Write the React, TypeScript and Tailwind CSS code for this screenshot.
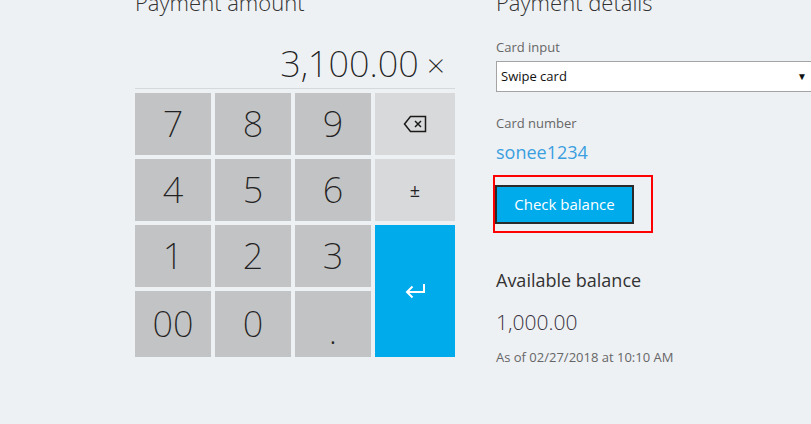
import React from "react";

const digitKey =
  "flex items-center justify-center bg-[#c2c3c4] text-[36px] font-extralight text-[#222] font-['Noto_Sans','Open_Sans',sans-serif]";
const funcKey = "flex items-center justify-center bg-[#d8d9da] text-[#222]";

function BackspaceIcon() {
  return (
    <svg width="24" height="18" viewBox="0 0 24 18" fill="none" stroke="#1a1a1a" strokeWidth="1.5">
      <path d="M7.5 1.5 H22.5 V16.5 H7.5 L1.5 9 Z" strokeLinejoin="miter" />
      <path d="M12 6 L18 12 M18 6 L12 12" />
    </svg>
  );
}

function EnterIcon() {
  return (
    <svg width="21" height="16" viewBox="0 0 21 16" fill="none" stroke="#fff" strokeWidth="2">
      <path d="M19 1 V9 H2" />
      <path d="M7.5 3.5 L2 9 L7.5 14.5" />
    </svg>
  );
}

export default function App() {
  return (
    <div
      className="min-h-screen w-full overflow-hidden bg-[#eef1f4] flex"
      style={{ fontFamily: '"Open Sans", "Noto Sans", sans-serif' }}
    >
      {/* payment amount */}
      <div className="ml-[135px] w-[320px] shrink-0">
        <h2 className="-mt-[13px] text-[22px] leading-[30px] font-light text-[#333]">Payment amount</h2>
        <div className="mt-[24px] flex items-baseline justify-end pr-[10px] border-b border-[#d6d9dc] h-[48px] text-[36px] leading-[46px] font-extralight text-[#222] font-['Noto_Sans','Open_Sans',sans-serif]">
          <span>3,100.00</span>
          <span className="ml-[8px] text-[32px]">×</span>
        </div>
        <div className="mt-[4px] grid grid-cols-[76px_76px_76px_80px] grid-rows-[62px_62px_62px_66px] gap-[4px]">
          {["7", "8", "9"].map((k) => (
            <div key={k} className={digitKey}>{k}</div>
          ))}
          <div className={funcKey}>
            <BackspaceIcon />
          </div>
          {["4", "5", "6"].map((k) => (
            <div key={k} className={digitKey}>{k}</div>
          ))}
          <div className={`${funcKey} text-[18px]`}>±</div>
          {["1", "2", "3"].map((k) => (
            <div key={k} className={digitKey}>{k}</div>
          ))}
          <div className="row-span-2 flex items-center justify-center bg-[#00abeb]">
            <EnterIcon />
          </div>
          <div className={digitKey}>00</div>
          <div className={digitKey}>0</div>
          <div className={`${digitKey} pt-[14px]`}>.</div>
        </div>
      </div>

      {/* payment details */}
      <div className="ml-[41px] w-[320px] shrink-0">
        <h2 className="-mt-[13px] text-[22px] leading-[30px] font-light text-[#333]">Payment details</h2>
        <div className="mt-[20px] text-[13px] leading-[20px] text-[#666]">Card input</div>
        <div className="mt-[4px] h-[31px] flex items-center justify-between bg-white border border-[#a4a4a4] pl-[4px] pr-[8px] text-[13px] text-[#111]">
          <span>Swipe card</span>
          <span className="text-[10px]">▼</span>
        </div>
        <div className="mt-[21px] text-[13px] leading-[20px] text-[#666]">Card number</div>
        <div className="mt-[5px] text-[18px] leading-[28px] text-[#3a9fe0]">sonee1234</div>
        <div className="mt-[9px] -ml-[3px] w-[160px] h-[58px] border-2 border-[#ff0000] pt-[8px]">
          <button className="h-[39px] w-[139px] border-2 border-[#2b2b2b] bg-[#00abeb] text-[15px] text-white">
            Check balance
          </button>
        </div>
        <div className="mt-[33px] text-[18px] leading-[28px] text-[#333]">Available balance</div>
        <div className="mt-[12px] text-[21px] leading-[32px] font-light text-[#3a3340]">1,000.00</div>
        <div className="mt-[11px] text-[13px] leading-[16px] text-[#666]">As of 02/27/2018 at 10:10 AM</div>
      </div>
    </div>
  );
}
